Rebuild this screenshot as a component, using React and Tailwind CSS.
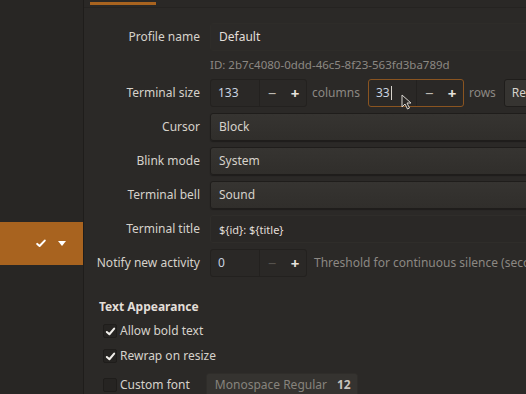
import React from 'react';

const Label = ({ children }) => (
  <div className="w-[101px] shrink-0 flex justify-end whitespace-nowrap text-[#d6d2cb]">{children}</div>
);

const Row = ({ label, children, className = '' }) => (
  <div className={`flex items-center gap-[10px] h-[28px] ${className}`}>
    <Label>{label}</Label>
    {children}
  </div>
);

const Spin = ({ value, focused, minusDim, cursor }) => (
  <div
    className={`flex items-center shrink-0 h-[28px] rounded-[3px] border bg-[#2a2826] ${
      focused ? 'w-[96px] border-[#8a5420]' : 'w-[97px] border-[#23211f]'
    }`}
  >
    <div className="flex items-center w-[49px] h-full pl-[7px] border-r border-[#23211f] text-[#c9d3e0]">
      {value}
      {cursor && <span className="inline-block w-[1px] h-[14px] bg-[#d6d2cb] ml-[1px]" />}
    </div>
    <div className={`w-[24px] text-center text-[15px] ${minusDim ? 'text-[#55524d]' : 'text-[#bdb9b2]'}`}>−</div>
    <div className="w-[22px] text-center text-[15px] font-bold text-[#e6e2dc]">+</div>
  </div>
);

const Combo = ({ children }) => (
  <div className="flex items-center shrink-0 h-[28px] w-[330px] pl-[8px] rounded-[3px] border border-[#1f1d1b] bg-gradient-to-b from-[#363431] to-[#302e2b] text-[#d6d2cb] shadow-[0_1px_1px_rgba(0,0,0,0.3)]">
    {children}
  </div>
);

const Check = ({ checked, label }) => (
  <div className="flex items-center gap-[3px] pl-[4px]">
    <div className="flex items-center justify-center w-[14px] h-[14px] rounded-[2px] border border-[#1f1d1b] bg-[#262422]">
      {checked && (
        <svg width="11" height="11" viewBox="0 0 12 12">
          <path d="M2 6.5 L4.8 9 L10 2.8" stroke="#f2f0ec" strokeWidth="2.2" fill="none" strokeLinecap="round" strokeLinejoin="round" />
        </svg>
      )}
    </div>
    <span className="text-[#d6d2cb]">{label}</span>
  </div>
);

export default function App() {
  return (
    <div
      className="w-[526px] h-[394px] overflow-hidden flex bg-[#2b2927] text-[12px] leading-none"
      style={{ fontFamily: '"Noto Sans", "Open Sans", sans-serif' }}
    >
      {/* sidebar */}
      <div className="w-[84px] shrink-0 flex flex-col border-r border-[#1f1d1b] bg-[#282624]">
        <div className="h-[222px]" />
        <div className="h-[43px] bg-[#a8631f] flex items-center justify-end gap-[12px] pr-[17px]">
          <svg width="10" height="9" viewBox="0 0 12 10">
            <path d="M1.5 5.5 L4.3 8 L10.5 1.5" stroke="#fff" strokeWidth="2.4" fill="none" strokeLinecap="round" strokeLinejoin="round" />
          </svg>
          <svg width="8" height="5" viewBox="0 0 8 5">
            <path d="M0 0 L8 0 L4 5 Z" fill="#fff" />
          </svg>
        </div>
      </div>

      {/* main */}
      <div className="flex-1 min-w-0 flex flex-col">
        <div className="h-[8px] shrink-0 border-b border-[#252321] bg-[#2a2826]">
          <div className="ml-[6px] mt-[2px] w-[66px] h-[3px] bg-[#a8631f]" />
        </div>

        <div className="flex flex-col pl-[15px] pt-[15px]">
          <Row label="Profile name">
            <div className="flex items-center shrink-0 h-[28px] w-[330px] pl-[8px] rounded-[3px] border border-[#2e2c29] bg-[#2c2a28] text-[#e2ded8]">
              Default
            </div>
          </Row>
          <div className="h-[28px] flex items-center pl-[111px] text-[#8c8883] text-[11.5px]">
            ID: 2b7c4080-0ddd-46c5-8f23-563fd3ba789d
          </div>

          <Row label="Terminal size">
            <Spin value="133" />
            <span className="text-[#8c8883] ml-[-5px]">columns</span>
            <div className="relative ml-[-2px]">
              <Spin value="33" focused cursor />
              <svg className="absolute left-[33px] top-[15px]" width="11" height="16" viewBox="0 0 11 16">
                <path d="M1 1 L1 13 L4 10 L6.5 15 L8.5 14 L6 9 L10 9 Z" fill="#2a2826" stroke="#d8d4ce" strokeWidth="1" />
              </svg>
            </div>
            <span className="text-[#8c8883] ml-[-5px]">rows</span>
            <div className="flex items-center shrink-0 h-[28px] w-[40px] pl-[7px] ml-[-2px] rounded-[3px] border border-[#1f1d1b] bg-[#363431] text-[#d6d2cb]">
              Reset
            </div>
          </Row>

          <Row label="Cursor" className="mt-[6px]">
            <Combo>Block</Combo>
          </Row>
          <Row label="Blink mode" className="mt-[6px]">
            <Combo>System</Combo>
          </Row>
          <Row label="Terminal bell" className="mt-[6px]">
            <Combo>Sound</Combo>
          </Row>
          <Row label="Terminal title" className="mt-[6px]">
            <div className="flex items-center shrink-0 h-[28px] w-[330px] pl-[8px] rounded-[3px] border border-[#2f2d2a] bg-[#2a2826] text-[#e2ded8] text-[11px]">
              {'${id}: ${title}'}
            </div>
          </Row>
          <Row label="Notify new activity" className="mt-[6px]">
            <Spin value="0" minusDim />
            <span className="text-[#8c8883] ml-[-3px] whitespace-nowrap">
              Threshold for continuous silence (seconds)
            </span>
          </Row>

          <div className="mt-[24px] font-bold text-[#e2ded8]">Text Appearance</div>
          <div className="mt-[11px]">
            <Check checked label="Allow bold text" />
          </div>
          <div className="mt-[11px]">
            <Check checked label="Rewrap on resize" />
          </div>
          <div className="mt-[10px] flex items-center">
            <Check label="Custom font" />
            <div className="ml-[16px] flex items-center shrink-0 h-[24px] w-[152px] pl-[8px] rounded-[3px] border border-[#2f2d2a] bg-[#353330]">
              <span className="text-[#87837d]">Monospace Regular</span>
              <span className="ml-[10px] text-[#c9c5be] font-bold">12</span>
            </div>
          </div>
        </div>
      </div>
    </div>
  );
}
